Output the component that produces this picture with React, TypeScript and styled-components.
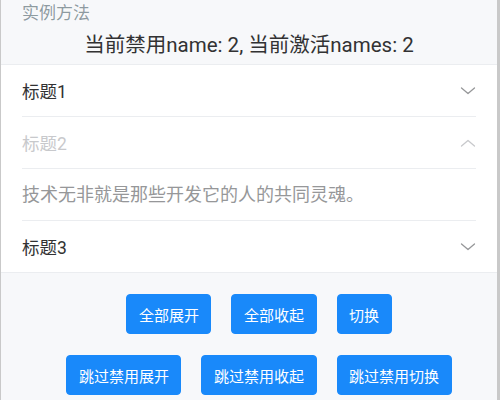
import styled, { createGlobalStyle } from 'styled-components'

const GlobalStyle = createGlobalStyle`
  html, body {
    margin: 0;
    padding: 0;
    background: #f7f8fa;
  }
  * {
    box-sizing: border-box;
  }
`

const Page = styled.div`
  width: 500px;
  height: 400px;
  overflow: hidden;
  background: #f7f8fa;
  border-left: 1px solid #c9c9c9;
  border-right: 3px solid #c9c9c9;
  font-family: Roboto, 'Noto Sans CJK SC', sans-serif;
  -webkit-font-smoothing: antialiased;
`

const DemoTitle = styled.h2`
  margin: 0;
  padding: 2px 21px 0;
  height: 25px;
  line-height: 22px;
  font-size: 17px;
  font-weight: 400;
  color: rgba(69, 90, 100, 0.6);
`

const Status = styled.div`
  height: 39px;
  line-height: 40px;
  text-align: center;
  font-size: 20.5px;
  color: #323233;
`

const Collapse = styled.div`
  background: #fff;
  border-top: 1px solid #ebedf0;
  border-bottom: 1px solid #ebedf0;
`

const Item = styled.div`
  & + &::before {
    content: '';
    display: block;
    height: 1px;
    margin: 0 21px;
    background: #ebedf0;
  }
`

const Header = styled.div<{ $disabled?: boolean }>`
  display: flex;
  align-items: center;
  justify-content: space-between;
  height: 51px;
  padding: 0 21px;
  font-size: 17.5px;
  color: ${p => (p.$disabled ? '#c8c9cc' : '#323233')};
`

const Arrow = styled.svg<{ $disabled?: boolean; $up?: boolean }>`
  width: 16px;
  height: 16px;
  color: ${p => (p.$disabled ? '#c8c9cc' : '#969799')};
  transform: ${p => (p.$up ? 'rotate(180deg)' : 'none')};
`

const Content = styled.div`
  margin: 0 21px;
  border-top: 1px solid #ebedf0;
  height: 52px;
  line-height: 51px;
  font-size: 18px;
  color: #969799;
`

const Actions = styled.div`
  display: flex;
  flex-direction: column;
  gap: 21px;
  padding-top: 21px;
`

const ButtonRow = styled.div`
  display: flex;
  justify-content: center;
`

const Button = styled.button`
  height: 40px;
  margin-left: 20px;
  padding: 0 11.5px;
  border: 1px solid #1989fa;
  border-radius: 4px;
  background: #1989fa;
  color: #fff;
  font-family: inherit;
  font-size: 15px;
  cursor: pointer;
`

const Chevron = ({ disabled, up }: { disabled?: boolean; up?: boolean }) => (
  <Arrow viewBox="0 0 16 16" $disabled={disabled} $up={up}>
    <polyline
      points="1.5,5 8,10.5 14.5,5"
      fill="none"
      stroke="currentColor"
      strokeWidth="1.3"
      strokeLinecap="round"
      strokeLinejoin="round"
    />
  </Arrow>
)

export default function App() {
  return (
    <Page>
      <GlobalStyle />
      <DemoTitle>实例方法</DemoTitle>
      <Status>当前禁用name: 2, 当前激活names: 2</Status>
      <Collapse>
        <Item>
          <Header>
            标题1
            <Chevron />
          </Header>
        </Item>
        <Item>
          <Header $disabled>
            标题2
            <Chevron disabled up />
          </Header>
          <Content>技术无非就是那些开发它的人的共同灵魂。</Content>
        </Item>
        <Item>
          <Header>
            标题3
            <Chevron />
          </Header>
        </Item>
      </Collapse>
      <Actions>
        <ButtonRow>
          <Button>全部展开</Button>
          <Button>全部收起</Button>
          <Button>切换</Button>
        </ButtonRow>
        <ButtonRow>
          <Button>跳过禁用展开</Button>
          <Button>跳过禁用收起</Button>
          <Button>跳过禁用切换</Button>
        </ButtonRow>
      </Actions>
    </Page>
  )
}
